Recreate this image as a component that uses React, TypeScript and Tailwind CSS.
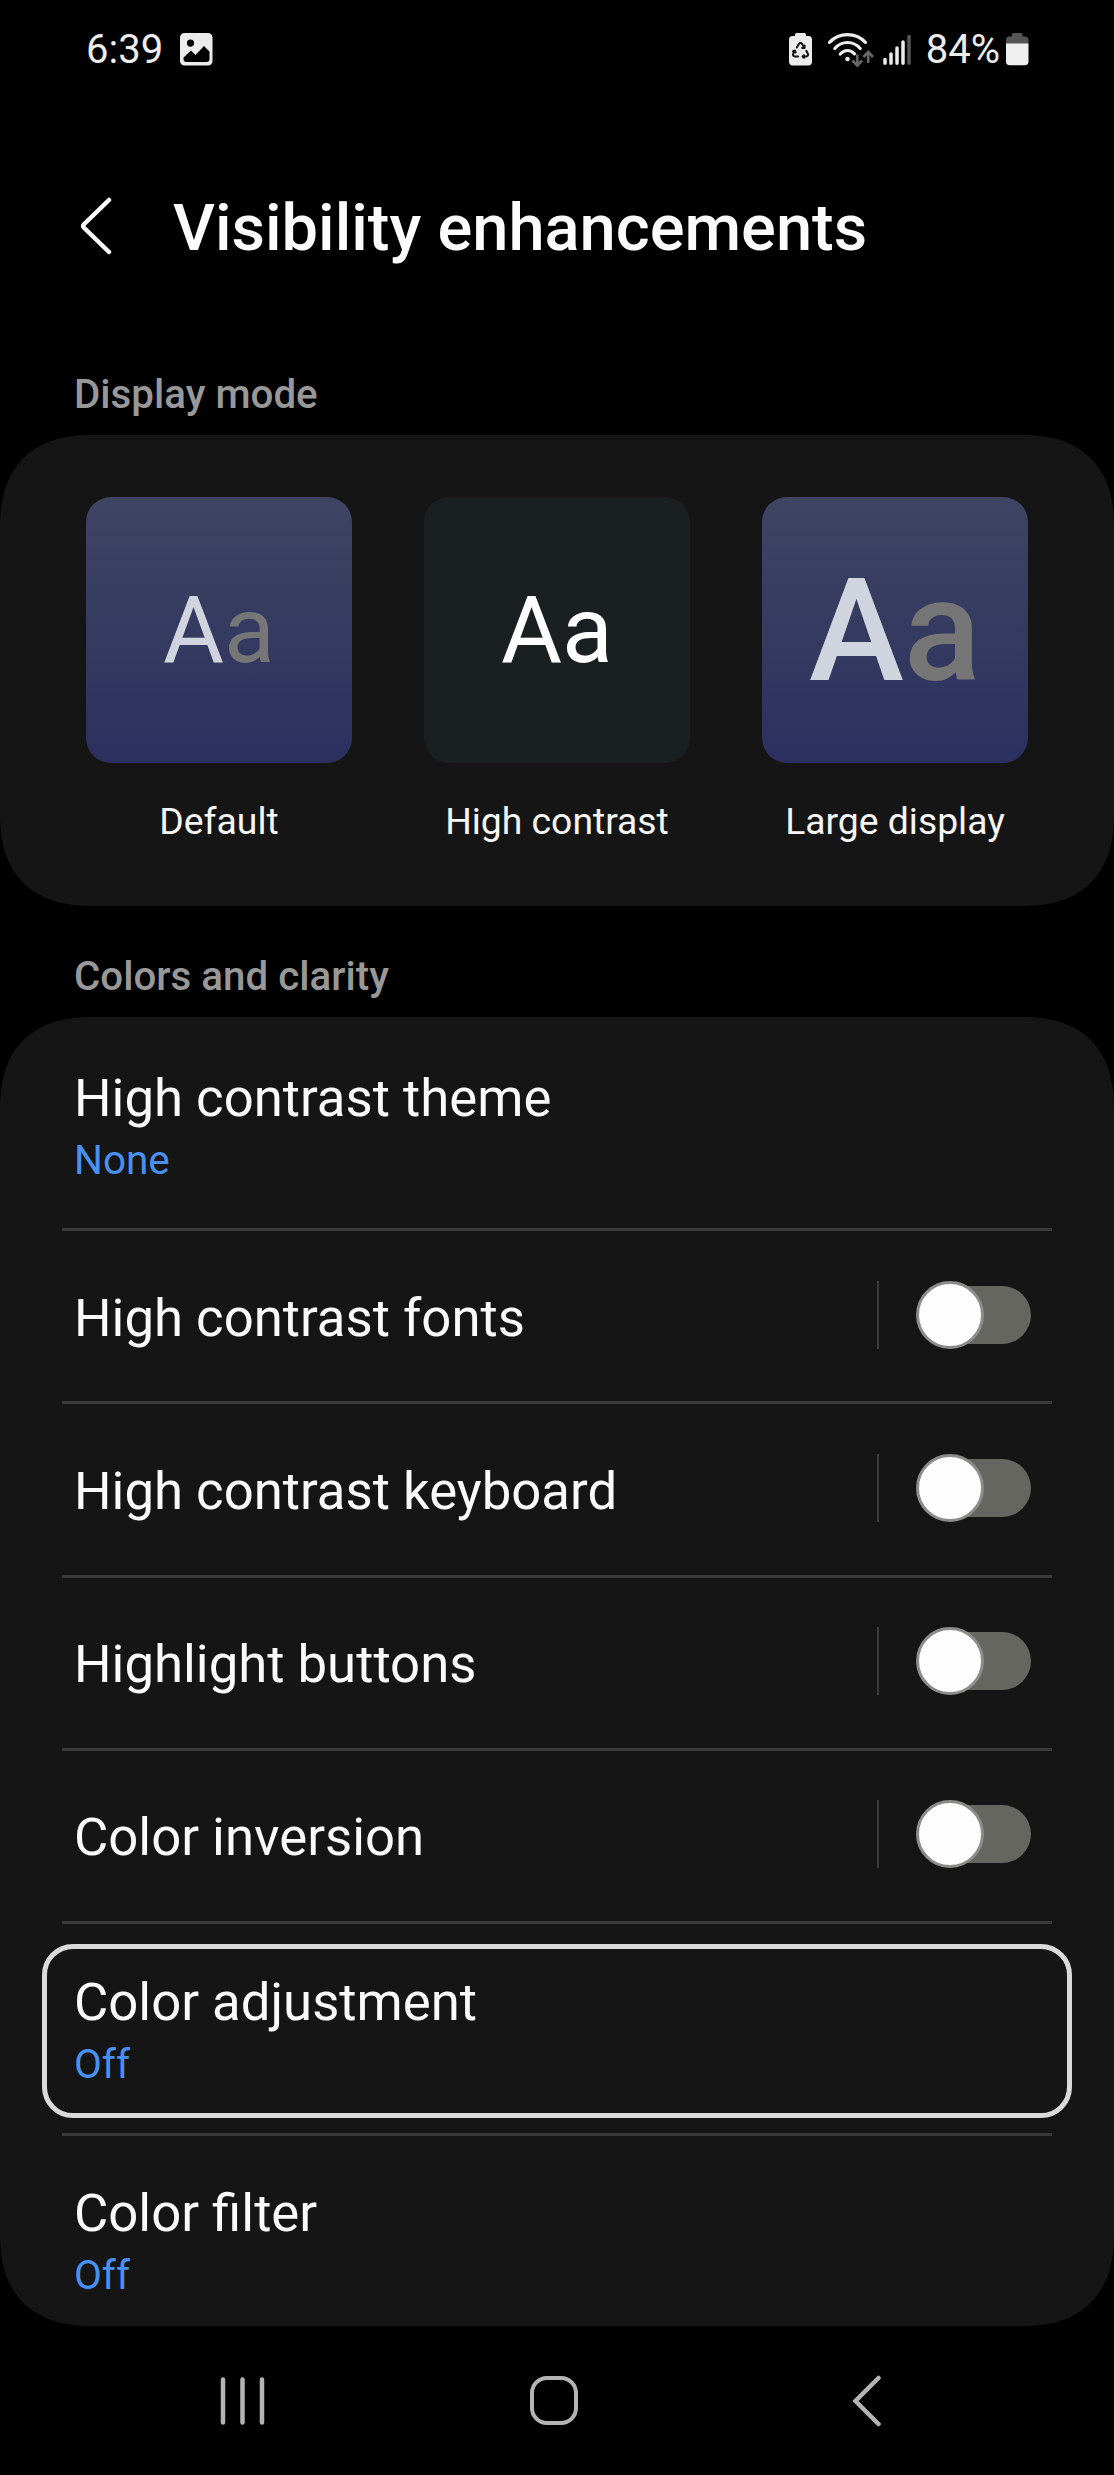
import React from "react";

function StatusBar() {
  return (
    <header className="flex h-[99px] items-center justify-between pr-[85px] pl-[86px] text-[40px] leading-none text-[#ececec]">
      <div className="flex items-center">
        <span className="w-[94px]">6:39</span>
        <svg width="33" height="33" viewBox="0 0 33 33">
          <path
            fillRule="evenodd"
            fill="#ececec"
            d="M4.500 0h23.500a4.500 4.500 0 0 1 4.500 4.500v23.500a4.500 4.500 0 0 1-4.500 4.500H4.500A4.500 4.500 0 0 1 0 28V4.500A4.500 4.500 0 0 1 4.500 0ZM10.500 6.500a3.600 3.600 0 1 0 0 7.200 3.600 3.600 0 0 0 0-7.200ZM3.500 24.500v1.500a3 3 0 0 0 3 3h20a3 3 0 0 0 3-3V18.500l-5.500-5.500-8.500 9-4.500-4.500Z"
          />
        </svg>
      </div>
      <div className="flex items-center">
        <svg width="24" height="34" viewBox="0 0 24 34">
          <path
            fill="#ececec"
            d="M7.500 0h8a1.500 1.500 0 0 1 1.500 1.500V3h2.500A3.500 3.500 0 0 1 23 6.500v22a4 4 0 0 1-4 4H4a4 4 0 0 1-4-4v-22A3.500 3.500 0 0 1 3.500 3H6V1.500A1.500 1.500 0 0 1 7.500 0Z"
          />
          <g fill="none" stroke="#111" strokeWidth="2" strokeLinecap="round" strokeLinejoin="round">
            <path d="M7.800 14.500l2.100-3.500a1.900 1.900 0 0 1 3.200 0l2.100 3.500M15.600 12.500v2.400h-2.400" />
            <path d="M17.300 17.800l1.600 2.900a1.900 1.900 0 0 1-1.700 2.800h-3.200M15 22.200l-1.400 1.300 1.400 1.300" />
            <path d="M9.200 23.500H5.900a1.900 1.900 0 0 1-1.700-2.800l1.600-2.900M4 18.200l2-.6.600 1.900" />
          </g>
        </svg>
        <svg className="ml-[14px]" width="48" height="36" viewBox="0 0 48 36">
          <g fill="none" stroke="#ececec" strokeWidth="3.200" strokeLinecap="round">
            <path d="M2.500 10.300Q10 2.600 20.500 2.600t18 7.700" />
            <path d="M7.800 16.500Q13 10.500 20.500 10.500t12.700 6" />
            <path d="M13.300 22Q16.500 18.500 20.500 18.500t7 3.300" />
          </g>
          <circle cx="20.500" cy="27" r="2.300" fill="#ececec" />
          <g fill="none" stroke="#666" strokeWidth="2.600">
            <path d="M30.300 22.500v11M25.500 28.500l4.800 5 4.800-5" />
            <path d="M41.200 31V20M36.400 25l4.800-5 4.800 5" />
          </g>
        </svg>
        <svg className="ml-[8px]" width="29" height="32" viewBox="0 0 29 32">
          <g strokeWidth="3.500" strokeLinecap="round" stroke="#ececec">
            <path d="M2 25.500v3.700M8 20v9.200M14 14v15.200M20 8v21.200" />
            <path d="M26 2.500v26.700" stroke="#555" />
          </g>
        </svg>
        <span className="ml-[14px]">84%</span>
        <svg className="ml-[6px]" width="23" height="33" viewBox="0 0 23 33">
          <path fill="#555" d="M7.500 0h7.500a1.500 1.500 0 0 1 1.500 1.500V3.500H19a3.500 3.500 0 0 1 3.500 3.500v4H0V7a3.500 3.500 0 0 1 3.500-3.500H6V1.500A1.500 1.500 0 0 1 7.500 0Z" />
          <path fill="#f0f0f0" d="M0 10.500h22.500v18a3.800 3.800 0 0 1-3.800 3.800H3.800A3.800 3.800 0 0 1 0 28.500Z" />
        </svg>
      </div>
    </header>
  );
}

const CARD =
  "shrink-0 bg-[#151515] rounded-[82px] supports-[corner-shape:squircle]:rounded-[92px] supports-[corner-shape:squircle]:[corner-shape:superellipse(1.25)]";

function SectionHeading({ children, className }: { children: React.ReactNode; className: string }) {
  return (
    <h2 className={`flex items-end pb-[20px] pl-[74px] text-[40.300px] leading-[40px] font-medium text-[#989898] ${className}`}>
      {children}
    </h2>
  );
}

function ModeOption({ label, tile, children }: { label: string; tile: string; children: React.ReactNode }) {
  return (
    <div className="flex w-[266px] flex-col items-center">
      <div className={`flex h-[266px] w-[266px] items-center justify-center rounded-[25px] ${tile}`}>{children}</div>
      <span className="mt-[40px] text-[37.300px] leading-[36px] whitespace-nowrap text-[#f6f6f6]">{label}</span>
    </div>
  );
}

function Toggle() {
  return (
    <div className="-mt-[3px] flex items-center">
      <div className="h-[68px] w-[2px] bg-[#3b3b3b]" />
      <div className="relative ml-[37px] flex h-[68px] w-[115px] items-center">
        <div className="ml-[4px] h-[58px] w-[111px] rounded-full bg-[#64665f]" />
        <div className="absolute top-0 left-0 h-[68px] w-[68px] rounded-full border-[3px] border-[#8c8c8a] bg-[#fdfdfd]" />
      </div>
    </div>
  );
}

function Divider() {
  return <div className="mr-[62px] ml-[62px] h-[3px] bg-[#393939]" />;
}

function ToggleRow({ label }: { label: string }) {
  return (
    <>
      <Divider />
      <div className="flex h-[170.250px] items-center justify-between pr-[83px] pl-[74px]">
        <span className="pt-[3px] text-[52.700px] leading-[54px] text-[#fafafa]">{label}</span>
        <Toggle />
      </div>
    </>
  );
}

function LinkText({ title, value }: { title: string; value: string }) {
  return (
    <>
      <div className="text-[52.700px] leading-[54px] text-[#fafafa]">{title}</div>
      <div className="mt-[15px] text-[40.500px] leading-[40px] text-[#4a90f0]">{value}</div>
    </>
  );
}

export default function App() {
  return (
    <div className="flex h-[2475px] w-[1114px] flex-col overflow-hidden bg-black font-['Roboto',sans-serif]">
      <StatusBar />
      <div className="flex h-[258px] items-center pl-[80px]">
        <svg className="-mt-[4px]" width="34" height="60" viewBox="0 0 34 60">
          <path
            d="M29 4 4 28.200q-1.600 1.800 0 3.600L29 56"
            fill="none"
            stroke="#fafafa"
            strokeWidth="4.500"
            strokeLinecap="round"
          />
        </svg>
        <h1 className="ml-[59px] text-[65px] leading-none [font-weight:540] text-[#fbfbfb]">Visibility enhancements</h1>
      </div>

      <SectionHeading className="h-[78px]">Display mode</SectionHeading>
      <section className={`flex h-[471px] justify-between px-[86px] pt-[62px] ${CARD}`}>
        <ModeOption label="Default" tile="bg-linear-to-b from-[#404463] via-[#353b60] to-[#2b305f]">
          <span className="pt-[2px] text-[93.500px] leading-none text-[#d0d4de]">
            A<span className="text-[#767676]">a</span>
          </span>
        </ModeOption>
        <ModeOption label="High contrast" tile="bg-[#1a2022]">
          <span className="pt-[2px] text-[93.500px] leading-none text-white">Aa</span>
        </ModeOption>
        <ModeOption label="Large display" tile="bg-linear-to-b from-[#404463] via-[#353b60] to-[#2b305f]">
          <span className="pt-[2px] text-[143px] leading-none [font-weight:540] text-[#d0d4de]">
            A<span className="text-[#767676]">a</span>
          </span>
        </ModeOption>
      </section>

      <SectionHeading className="h-[111px]">Colors and clarity</SectionHeading>
      <section className={`h-[1309px] ${CARD}`}>
        <div className="h-[211px] pt-[54px] pl-[74px]">
          <LinkText title="High contrast theme" value="None" />
        </div>
        <ToggleRow label="High contrast fonts" />
        <ToggleRow label="High contrast keyboard" />
        <ToggleRow label="Highlight buttons" />
        <ToggleRow label="Color inversion" />
        <Divider />
        <div className="h-[208.500px] pt-[20px] pl-[42px]">
          <div className="h-[174px] w-[1030px] rounded-[31px] border-[5px] border-[#dadada] pt-[26px] pl-[27px]">
            <LinkText title="Color adjustment" value="Off" />
          </div>
        </div>
        <Divider />
        <div className="pt-[50px] pl-[74px]">
          <LinkText title="Color filter" value="Off" />
        </div>
      </section>

      <nav className="flex h-[149px] items-center justify-between pr-[232px] pl-[220px]">
        <svg width="46" height="48" viewBox="0 0 46 48">
          <path d="M3 2.500v43M22.500 2.500v43M42 2.500v43" stroke="#b4b4b4" strokeWidth="4.500" strokeLinecap="round" />
        </svg>
        <div className="mr-[10px] h-[49px] w-[48px] rounded-[17px] border-[4.500px] border-[#b4b4b4]" />
        <svg width="30" height="52" viewBox="0 0 30 52">
          <path d="M26.500 3 3.500 26l23 23" fill="none" stroke="#b4b4b4" strokeWidth="4.500" strokeLinecap="round" />
        </svg>
      </nav>
    </div>
  );
}
